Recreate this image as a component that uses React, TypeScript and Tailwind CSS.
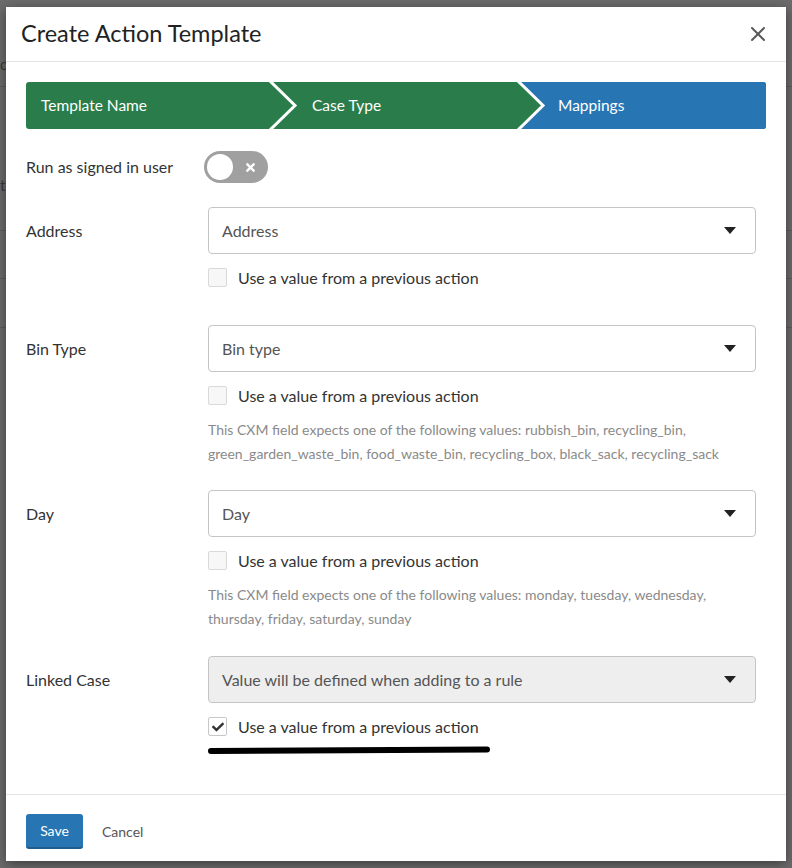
import { X } from 'lucide-react';
import { FaCheck, FaTimes } from 'react-icons/fa';

const FONT = { fontFamily: 'Lato, "Open Sans", "Liberation Sans", sans-serif' };

/* Down caret used at the end of each select box. */
function Caret() {
  return (
    <svg width="12" height="7" viewBox="0 0 12 7" className="shrink-0">
      <polygon points="0,0 12,0 6,7" fill="#222" />
    </svg>
  );
}

function Checkbox({ checked = false }: { checked?: boolean }) {
  return (
    <div className="flex h-[19px] items-center gap-[11px]">
      <span
        className={`flex h-[19px] w-[19px] shrink-0 items-center justify-center rounded-[2px] border ${
          checked ? 'border-[#c8c8c8] bg-white' : 'border-[#d9d9d9] bg-[#f7f7f7]'
        }`}
      >
        {checked && <FaCheck size={12} color="#333" />}
      </span>
      <span className="text-[16px] leading-[19px] text-[#333]">Use a value from a previous action</span>
    </div>
  );
}

function Field({
  label,
  value,
  help,
  disabled = false,
  checked = false,
  className = '',
}: {
  label: string;
  value: string;
  help?: string[];
  disabled?: boolean;
  checked?: boolean;
  className?: string;
}) {
  return (
    <div className={`flex ${className}`}>
      <div className="flex h-[47px] w-[182px] shrink-0 items-center text-[16px] text-[#333]">{label}</div>
      <div className="w-[548px]">
        <div
          className={`flex h-[47px] items-center justify-between rounded-[4px] border border-[#c4c4c4] pl-[13px] pr-[19px] text-[16px] text-[#555] ${
            disabled ? 'bg-[#eeeeee]' : 'bg-white'
          }`}
        >
          <span>{value}</span>
          <Caret />
        </div>
        <div className="mt-[14px]">
          <Checkbox checked={checked} />
        </div>
        {help && (
          <div className="mt-[13px] text-[14px] leading-6 text-[#8a8a8a]">
            {help.map((line) => (
              <div key={line}>{line}</div>
            ))}
          </div>
        )}
      </div>
    </div>
  );
}

export default function App() {
  return (
    <div className="relative h-[868px] w-[792px] overflow-hidden bg-[#6c6c6c]" style={FONT}>
      {/* page behind the overlay */}
      <div className="absolute left-0 top-[53px] text-[15px] text-[#3a3a3a]">ce</div>
      <div className="absolute left-0 top-[174px] text-[15px] text-[#3a3a3a]">t</div>
      {[86, 230, 278, 327].map((y) => (
        <div key={y} className="absolute left-0 right-0 h-px bg-[#5c5c5c]" style={{ top: y }} />
      ))}

      <div className="relative pl-[6px] pt-[7px]">
        <div className="w-[780px] bg-white shadow-[0_3px_12px_rgba(0,0,0,0.45)]">
          {/* header */}
          <div className="flex h-[55px] items-center justify-between border-b border-[#e3e3e3] pl-[15px] pr-[16px]">
            <h1 className="text-[23.5px] text-[#222]">Create Action Template</h1>
            <X size={24} strokeWidth={2} color="#5a5a5a" />
          </div>

          <div className="px-[20px] pb-[40px] pt-[20px]">
            {/* step wizard */}
            <div className="relative h-[47px] overflow-hidden rounded-[3px]">
              <svg width="740" height="47" className="absolute inset-0">
                <rect width="740" height="47" fill="#2a7d4a" />
                <polygon points="491,0 740,0 740,47 491,47 517,23.5" fill="#2775b3" />
                <polyline points="243,-2 269,23.5 243,49" fill="none" stroke="#fff" strokeWidth="3" />
                <polyline points="491,-2 517,23.5 491,49" fill="none" stroke="#fff" strokeWidth="3" />
              </svg>
              <div className="relative flex h-full items-center text-[15.5px] text-white">
                <span className="w-[286px] pl-[15px]">Template Name</span>
                <span className="w-[246px]">Case Type</span>
                <span>Mappings</span>
              </div>
            </div>

            {/* run as signed in user */}
            <div className="mt-[22px] flex items-center">
              <span className="w-[178px] text-[16px] text-[#333]">Run as signed in user</span>
              <div className="flex h-[32px] w-[64px] items-center justify-between rounded-full bg-[#a0a0a0] pl-[3px] pr-[11px]">
                <span className="h-[26px] w-[26px] rounded-full bg-white" />
                <FaTimes size={13} color="#fff" />
              </div>
            </div>

            <Field className="mt-[24px]" label="Address" value="Address" />

            <Field
              className="mt-[38px]"
              label="Bin Type"
              value="Bin type"
              help={[
                'This CXM field expects one of the following values: rubbish_bin, recycling_bin,',
                'green_garden_waste_bin, food_waste_bin, recycling_box, black_sack, recycling_sack',
              ]}
            />

            <Field
              className="mt-[24px]"
              label="Day"
              value="Day"
              help={[
                'This CXM field expects one of the following values: monday, tuesday, wednesday,',
                'thursday, friday, saturday, sunday',
              ]}
            />

            <Field
              className="mt-[25px]"
              label="Linked Case"
              value="Value will be defined when adding to a rule"
              disabled
              checked
            />

            {/* hand-drawn underline */}
            <div className="ml-[181px] mt-[10px] h-[8px]">
              <svg width="284" height="8" viewBox="0 0 284 8">
                <path d="M4 5 L280 3.5" stroke="#000" strokeWidth="6" strokeLinecap="round" />
              </svg>
            </div>
          </div>

          {/* footer */}
          <div className="flex items-center gap-[19px] border-t border-[#e3e3e3] pb-[12px] pl-[20px] pt-[19px]">
            <button
              type="button"
              className="h-[35px] w-[57px] rounded-[3px] border-b-2 border-[#1d5c8e] bg-[#2775b3] text-[14px] text-white"
            >
              Save
            </button>
            <button type="button" className="text-[14px] text-[#555]">
              Cancel
            </button>
          </div>
        </div>
      </div>
    </div>
  );
}
